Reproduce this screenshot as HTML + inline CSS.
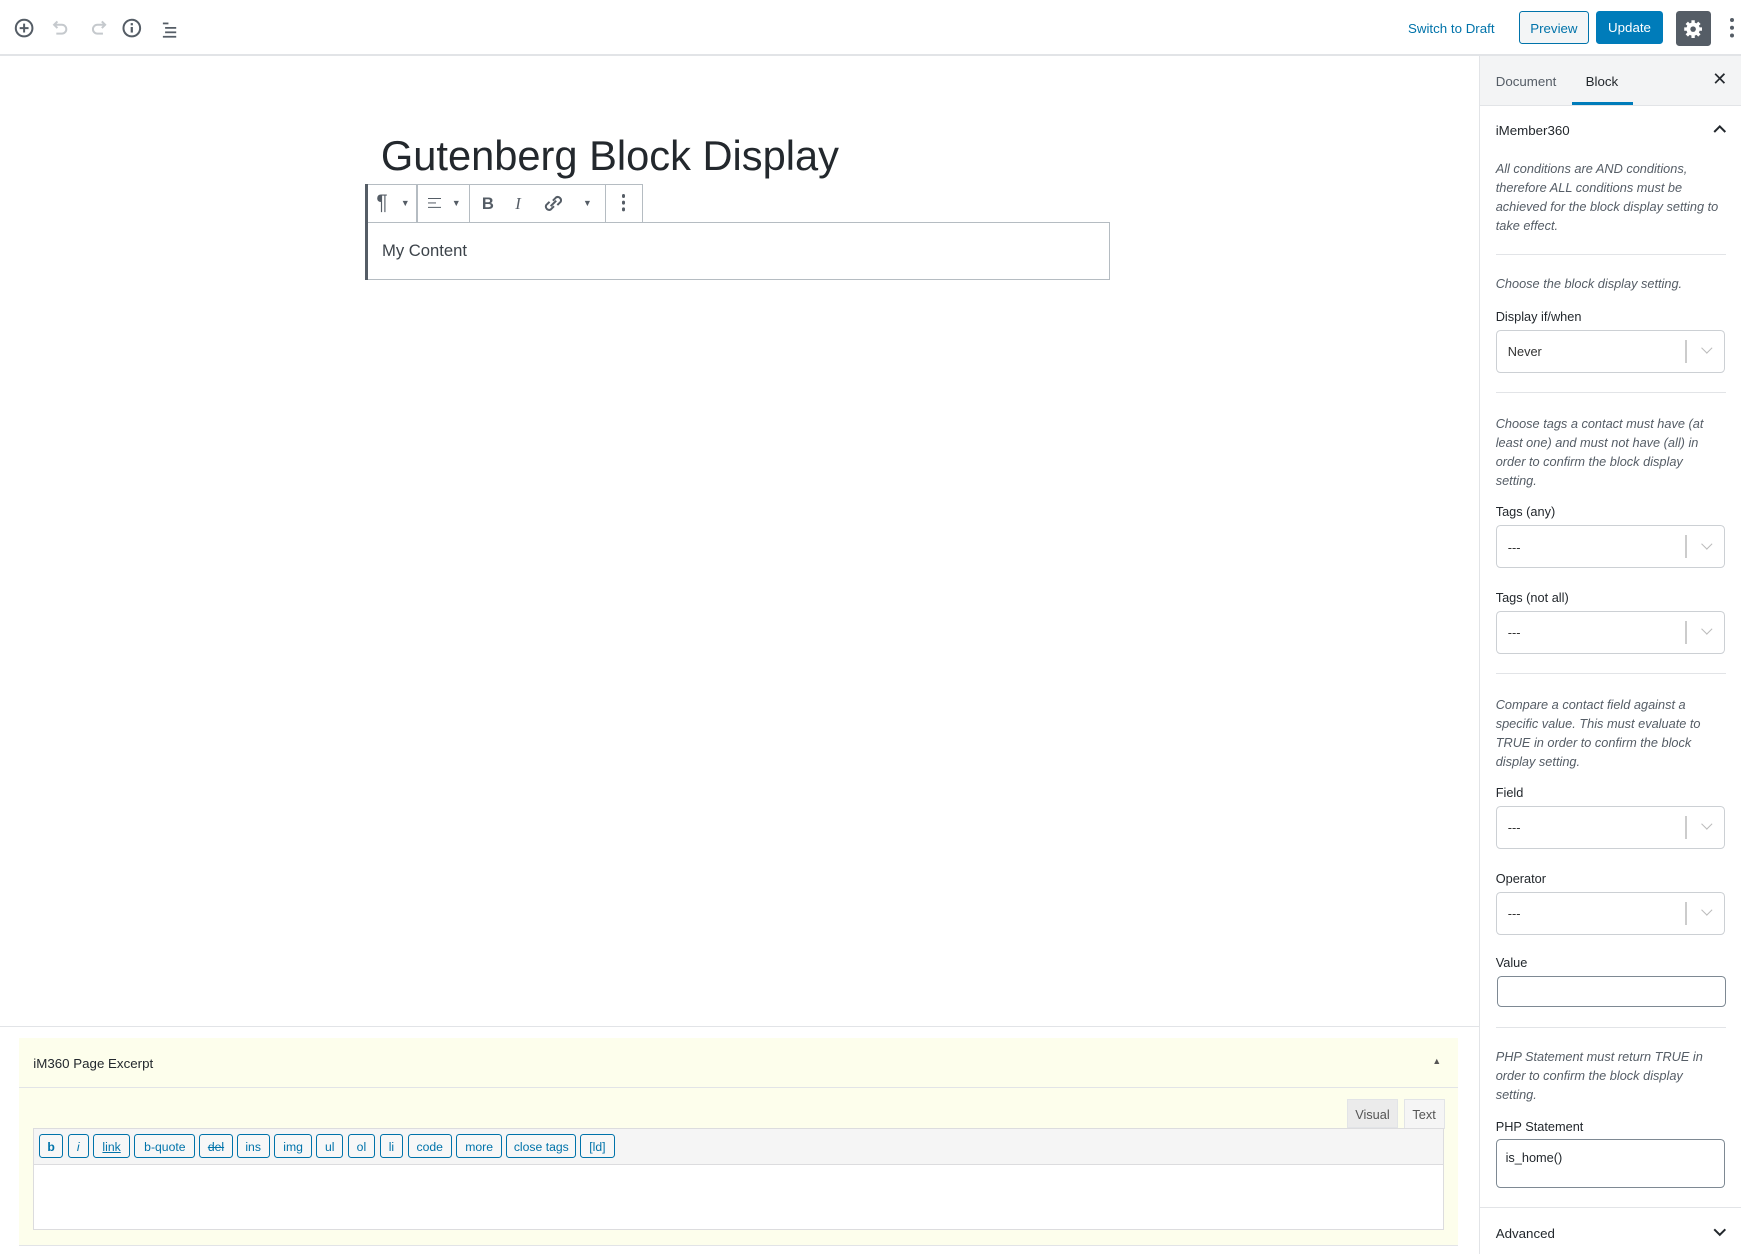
<!DOCTYPE html>
<html><head><meta charset="utf-8"><style>
html,body{margin:0;padding:0;width:1741px;height:1254px;overflow:hidden;background:#fff}
#w{position:relative;width:1568px;height:1129px;zoom:1.1104;font-family:"Liberation Sans",sans-serif;color:#23282d;font-size:12px}
.a{position:absolute}
.it{font-style:italic;color:#555d66;font-size:11.5px;line-height:17px}
.lbl{font-size:11.5px;color:#23282d}
.sel{position:absolute;left:1347px;width:205px;height:37px;border:1px solid #ccd0d4;border-radius:4px;background:#fff}
.sel span{position:absolute;left:10px;top:12px;font-size:11.5px;color:#333}
.sel i{position:absolute;right:34px;top:8px;width:1px;height:21px;background:#ccc}
.sel b{position:absolute;right:12px;top:12px;width:6px;height:6px;border-right:1.5px solid #bbb;border-bottom:1.5px solid #bbb;transform:rotate(45deg)}
.sep{position:absolute;left:1347px;width:207px;height:1px;background:#e2e4e7}
.qt{position:absolute;top:1021px;height:22px;border:1px solid #0073aa;border-radius:3px;background:#f7f7f7;color:#0073aa;font-size:11px;line-height:22px;text-align:center;box-sizing:border-box}
</style></head><body><div id="w">
<div class="a" style="left:0;top:49px;width:1568px;height:1px;background:#e2e4e7"></div>
<svg class="a" style="left:12px;top:15px" width="150" height="20" viewBox="0 0 150 20">
<g fill="none" stroke="#555d66" stroke-width="1.8"><circle cx="10" cy="10" r="7.5"/><path d="M10 6v8M6 10h8"/></g>
<g fill="none" stroke="#c5c9cd" stroke-width="1.8"><path d="M38 7h6a4 4 0 0 1 0 8h-5M40 4l-3 3 3 3"/><path d="M82 7h-6a4 4 0 0 0 0 8h5M80 4l3 3-3 3"/></g>
<g fill="none" stroke="#555d66" stroke-width="1.8"><circle cx="107" cy="10" r="7.5"/></g><rect x="106" y="9" width="2" height="5" fill="#555d66"/><rect x="106" y="5.5" width="2" height="2" fill="#555d66"/>
<g fill="#555d66"><rect x="135" y="5" width="5" height="1.6"/><rect x="137" y="9" width="10" height="1.6"/><rect x="137" y="13" width="10" height="1.6"/><rect x="135" y="17" width="12" height="1.6"/></g>
</svg>
<div class="a" style="left:1268px;top:19px;color:#0073aa;font-size:12px">Switch to Draft</div>
<div class="a" style="left:1368px;top:10px;width:61px;height:28px;border:1px solid #0073aa;border-radius:3px;background:#f3f5f6;color:#0073aa;text-align:center;line-height:30px;font-size:12px">Preview</div>
<div class="a" style="left:1437px;top:10px;width:61px;height:30px;border-radius:3px;background:#007cba;color:#fff;text-align:center;line-height:31px;font-size:12px">Update</div>
<div class="a" style="left:1509px;top:10px;width:32px;height:31px;border-radius:3px;background:#555d66"></div>
<svg class="a" style="left:1515px;top:16px" width="20" height="20" viewBox="0 0 20 20"><g fill="#fff"><circle cx="10" cy="10" r="6"/><g stroke="#fff" stroke-width="3"><path d="M10 2v16M2 10h16M4.3 4.3l11.4 11.4M15.7 4.3L4.3 15.7"/></g></g><circle cx="10" cy="10" r="2.5" fill="#555d66"/></svg>
<div class="a" style="left:1558px;top:16px;width:4px;height:4px;border-radius:2px;background:#555d66;box-shadow:0 7px 0 #555d66,0 14px 0 #555d66"></div>
<div class="a" style="left:1332px;top:50px;width:1px;height:1079px;background:#e2e4e7"></div>
<div class="a" style="left:1333px;top:50px;width:235px;height:45px;background:#f3f4f5;border-bottom:1px solid #e2e4e7"></div>
<div class="a" style="left:1347px;top:67px;font-size:12px;color:#555d66">Document</div>
<div class="a" style="left:1428px;top:67px;font-size:12px">Block</div>
<div class="a" style="left:1416px;top:92px;width:55px;height:3px;background:#007cba"></div>
<div class="a" style="left:1542px;top:62px;font-size:16px;color:#23282d">✕</div>
<div class="a" style="left:1347px;top:111px;font-size:12px">iMember360</div>
<svg class="a" style="left:1542px;top:110px" width="14" height="12"><path d="M2 9l5-5 5 5" fill="none" stroke="#23282d" stroke-width="1.8"/></svg>
<div class="a it" style="left:1347px;top:144px;width:210px">All conditions are AND conditions, therefore ALL conditions must be achieved for the block display setting to take effect.</div>
<div class="sep" style="top:229px"></div>
<div class="a it" style="left:1347px;top:248px">Choose the block display setting.</div>
<div class="a lbl" style="left:1347px;top:278px">Display if/when</div>
<div class="sel" style="top:297px"><span>Never</span><i></i><b></b></div>
<div class="sep" style="top:353px"></div>
<div class="a it" style="left:1347px;top:374px;width:200px">Choose tags a contact must have (at least one) and must not have (all) in order to confirm the block display setting.</div>
<div class="a lbl" style="left:1347px;top:454px">Tags (any)</div>
<div class="sel" style="top:473px"><span>---</span><i></i><b></b></div>
<div class="a lbl" style="left:1347px;top:531px">Tags (not all)</div>
<div class="sel" style="top:550px"><span>---</span><i></i><b></b></div>
<div class="sep" style="top:606px"></div>
<div class="a it" style="left:1347px;top:627px;width:200px">Compare a contact field against a specific value. This must evaluate to TRUE in order to confirm the block display setting.</div>
<div class="a lbl" style="left:1347px;top:707px">Field</div>
<div class="sel" style="top:726px"><span>---</span><i></i><b></b></div>
<div class="a lbl" style="left:1347px;top:784px">Operator</div>
<div class="sel" style="top:803px"><span>---</span><i></i><b></b></div>
<div class="a lbl" style="left:1347px;top:860px">Value</div>
<div class="a" style="left:1348px;top:879px;width:205px;height:26px;border:1px solid #7e8993;border-radius:4px"></div>
<div class="sep" style="top:925px"></div>
<div class="a it" style="left:1347px;top:944px;width:200px">PHP Statement must return TRUE in order to confirm the block display setting.</div>
<div class="a lbl" style="left:1347px;top:1008px">PHP Statement</div>
<div class="a" style="left:1347px;top:1026px;width:205px;height:42px;border:1px solid #7e8993;border-radius:4px"><span style="position:absolute;left:8px;top:9px;font-size:11.5px">is_home()</span></div>
<div class="a" style="left:1333px;top:1087px;width:235px;height:1px;background:#e2e4e7"></div>
<div class="a" style="left:1347px;top:1104px;font-size:12px">Advanced</div>
<svg class="a" style="left:1542px;top:1104px" width="14" height="12"><path d="M2 3l5 5 5-5" fill="none" stroke="#23282d" stroke-width="1.8"/></svg>
<div class="a" style="left:343px;top:119px;font-size:37.5px;color:#23282d;white-space:nowrap">Gutenberg Block Display</div>
<div class="a" style="left:329px;top:166px;width:2px;height:86px;background:#555d66"></div>
<div class="a" style="left:331px;top:166px;width:247px;height:33px;border:1px solid #b5bcc2;border-left:none;background:#fff"></div>
<div class="a" style="left:375px;top:167px;width:1px;height:33px;background:#b5bcc2"></div>
<div class="a" style="left:422px;top:167px;width:1px;height:33px;background:#b5bcc2"></div>
<div class="a" style="left:545px;top:167px;width:1px;height:33px;background:#b5bcc2"></div>
<div class="a" style="left:339px;top:172px;font-size:19px;color:#555d66">¶</div>
<div class="a" style="left:361px;top:178px;font-size:8px;color:#555d66">▼</div>
<div class="a" style="left:385px;top:178px;width:12px;height:1.5px;background:#555d66;box-shadow:0 4px 0 #555d66,0 8px 0 #555d66"></div>
<div class="a" style="left:393px;top:182px;width:4px;height:1.5px;background:#fff"></div>
<div class="a" style="left:407px;top:178px;font-size:8px;color:#555d66">▼</div>
<div class="a" style="left:434px;top:175px;font-size:15px;font-weight:bold;color:#555d66">B</div>
<div class="a" style="left:464px;top:175px;font-size:15px;font-style:italic;font-family:'Liberation Serif',serif;color:#555d66">I</div>
<svg class="a" style="left:490px;top:175px" width="18" height="17"><g fill="none" stroke="#555d66" stroke-width="1.8"><path d="M8 6l3-3a3 3 0 0 1 4 4l-3 3"/><path d="M9 11l-3 3a3 3 0 0 1-4-4l3-3"/><path d="M6 11l5-5"/></g></svg>
<div class="a" style="left:525px;top:178px;font-size:8px;color:#555d66">▼</div>
<div class="a" style="left:560px;top:175px;width:3px;height:3px;border-radius:2px;background:#555d66;box-shadow:0 6px 0 #555d66,0 12px 0 #555d66"></div>
<div class="a" style="left:331px;top:200px;width:668px;height:50px;border:1px solid #b5bcc2;border-left:none"></div>
<div class="a" style="left:344px;top:217px;font-size:15px;color:#3c434a">My Content</div>
<div class="a" style="left:0;top:924px;width:1332px;height:1px;background:#e2e4e7"></div>
<div class="a" style="left:17px;top:935px;width:1296px;height:186px;background:#fdfeec;border-bottom:1px solid #e2e4e7"></div>
<div class="a" style="left:17px;top:979px;width:1296px;height:1px;background:#e2e4e7"></div>
<div class="a" style="left:30px;top:951px;font-size:12px">iM360 Page Excerpt</div>
<div class="a" style="left:1290px;top:951px;font-size:8px;color:#555">▲</div>
<div class="a" style="left:1213px;top:990px;width:46px;height:26px;background:#ebebeb;border:1px solid #e2e4e7;box-sizing:border-box;color:#555;text-align:center;line-height:27px;font-size:11.5px">Visual</div>
<div class="a" style="left:1264px;top:990px;width:37px;height:27px;background:#f5f5f5;border:1px solid #e2e4e7;border-bottom:none;box-sizing:border-box;color:#555;text-align:center;line-height:27px;font-size:11.5px">Text</div>
<div class="a" style="left:30px;top:1016px;width:1270px;height:33px;background:#f5f5f5;border:1px solid #dcdcde;box-sizing:border-box"></div>
<div class="a" style="left:30px;top:1049px;width:1270px;height:59px;background:#fff;border:1px solid #dcdcde;border-top:none;box-sizing:border-box"></div>
<div class="qt" style="left:35px;width:22px;font-weight:bold">b</div>
<div class="qt" style="left:61px;width:19px;font-style:italic">i</div>
<div class="qt" style="left:84px;width:33px;text-decoration:underline">link</div>
<div class="qt" style="left:121px;width:55px">b-quote</div>
<div class="qt" style="left:179px;width:31px;text-decoration:line-through">del</div>
<div class="qt" style="left:213px;width:30px">ins</div>
<div class="qt" style="left:247px;width:34px">img</div>
<div class="qt" style="left:285px;width:24px">ul</div>
<div class="qt" style="left:313px;width:25px">ol</div>
<div class="qt" style="left:342px;width:21px">li</div>
<div class="qt" style="left:367px;width:40px">code</div>
<div class="qt" style="left:411px;width:41px">more</div>
<div class="qt" style="left:456px;width:63px">close tags</div>
<div class="qt" style="left:522px;width:32px">[ld]</div>
</div></body></html>
